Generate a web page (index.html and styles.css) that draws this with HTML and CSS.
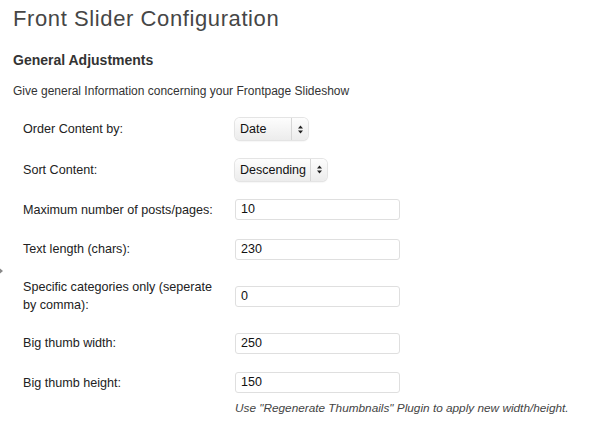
FILE: index.html
```html
<!DOCTYPE html>
<html>
<head>
<meta charset="utf-8">
<link rel="stylesheet" href="styles.css">
</head>
<body>
<span class="pointer"></span>
<div class="wrap">
  <h1 class="title">Front Slider Configuration</h1>
  <h3 class="section">General Adjustments</h3>
  <p class="desc">Give general Information concerning your Frontpage Slideshow</p>
  <div class="form">
    <div class="row">
      <label class="label">Order Content by:</label>
      <div class="field"><span class="select sel-date"><span class="sel-text">Date</span><span class="sel-arrow"><svg width="5" height="9" viewBox="0 0 5 9"><path d="M2.5 0.5 L5 3.5 L0 3.5 Z M2.5 8.5 L5 5.5 L0 5.5 Z" fill="#222"/></svg></span></span></div>
    </div>
    <div class="row">
      <label class="label">Sort Content:</label>
      <div class="field"><span class="select"><span class="sel-text">Descending</span><span class="sel-arrow"><svg width="5" height="9" viewBox="0 0 5 9"><path d="M2.5 0.5 L5 3.5 L0 3.5 Z M2.5 8.5 L5 5.5 L0 5.5 Z" fill="#222"/></svg></span></span></div>
    </div>
    <div class="row">
      <label class="label">Maximum number of posts/pages:</label>
      <div class="field"><span class="input">10</span></div>
    </div>
    <div class="row">
      <label class="label">Text length (chars):</label>
      <div class="field"><span class="input">230</span></div>
    </div>
    <div class="row">
      <label class="label">Specific categories only (seperate by comma):</label>
      <div class="field"><span class="input">0</span></div>
    </div>
    <div class="row">
      <label class="label">Big thumb width:</label>
      <div class="field"><span class="input">250</span></div>
    </div>
    <div class="row row-last">
      <label class="label">Big thumb height:</label>
      <div class="field"><span class="input">150</span><span class="note">Use "Regenerate Thumbnails" Plugin to apply new width/height.</span></div>
    </div>
  </div>
</div>
</body>
</html>
```
FILE: styles.css
```css
html, body {
  margin: 0;
  padding: 0;
  background: #fff;
}
body {
  font-family: "Liberation Sans", Arial, sans-serif;
  color: #333;
  width: 600px;
  height: 428px;
  overflow: hidden;
  position: relative;
}
.pointer {
  position: absolute;
  left: -3px;
  top: 266px;
  width: 0;
  height: 0;
  border-top: 5px solid transparent;
  border-bottom: 5px solid transparent;
  border-left: 6px solid #8a8a8a;
}
.wrap {
  padding: 0 0 0 13px;
}
.title {
  margin: 0;
  padding-top: 7px;
  font-size: 22px;
  line-height: 24px;
  font-weight: normal;
  color: #464646;
  letter-spacing: 0.6px;
}
.section {
  margin: 20px 0 0 0;
  font-size: 14px;
  line-height: 18px;
  font-weight: bold;
  color: #333;
}
.desc {
  margin: 14px 0 0 0;
  font-size: 12px;
  line-height: 16px;
  color: #333;
}
.form {
  margin-top: 10px;
  padding-left: 10px;
}
.row {
  display: grid;
  grid-template-columns: 212px 1fr;
  align-items: center;
  padding: 9px 0 9.5px 0;
}
.label {
  font-size: 12.6px;
  line-height: 18px;
  color: #222;
  padding-right: 10px;
}
.field {
  position: relative;
  display: flex;
  flex-direction: column;
  align-items: flex-start;
}
.select {
  display: inline-flex;
  align-items: center;
  height: 22px;
  box-sizing: border-box;
  border-radius: 5px;
  background: linear-gradient(#fdfdfd, #ececec);
  box-shadow: 0 0 0 1px #e4e4e4, 0 1px 2px rgba(0,0,0,0.12);
  font-size: 12.5px;
  color: #111;
}
.sel-text {
  padding: 0 4px 0 5px;
  line-height: 22px;
}
.sel-date .sel-text {
  width: 47px;
}
.sel-arrow {
  display: flex;
  align-items: center;
  justify-content: center;
  width: 16px;
  height: 22px;
  border-left: 1px solid #d6d6d6;
}
.input {
  display: block;
  box-sizing: border-box;
  width: 165px;
  height: 21px;
  border: 1px solid #dfdfdf;
  border-radius: 3px;
  padding: 0 5px;
  font-size: 12.5px;
  line-height: 19px;
  color: #111;
  background: #fff;
}
.note {
  position: absolute;
  top: 29px;
  left: 0;
  font-size: 11.8px;
  font-style: italic;
  color: #444;
  white-space: nowrap;
}
```
